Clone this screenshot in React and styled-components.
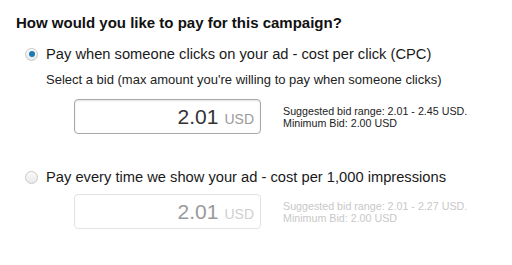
import React from 'react'
import styled, { createGlobalStyle } from 'styled-components'

const GlobalStyle = createGlobalStyle`
  html, body {
    margin: 0;
    background: #fff;
  }
  body {
    font-family: "Liberation Sans", Arial, sans-serif;
    color: #222;
  }
`

const Page = styled.div`
  padding: 14px 0 0 16px;
`

const Heading = styled.h2`
  margin: 0;
  font-size: 15px;
  line-height: 18px;
  font-weight: bold;
  color: #111;
`

const Option = styled.div`
  margin-top: ${p => p.$gap}px;
`

const OptionRow = styled.label`
  display: flex;
  align-items: center;
  gap: 8px;
  padding-left: 9px;
  font-size: 14.7px;
  line-height: 18px;
  color: #1a1a1a;
`

const Radio = styled.span`
  box-sizing: border-box;
  width: 13px;
  height: 13px;
  border-radius: 50%;
  border: 1px solid #c9c9c9;
  background: linear-gradient(#fafafa, #e9e9e9);
  display: flex;
  align-items: center;
  justify-content: center;
  flex: none;

  &::after {
    content: '';
    width: 6px;
    height: 6px;
    border-radius: 50%;
    background: ${p => (p.$checked ? '#1b79b4' : 'transparent')};
  }
`

const Hint = styled.div`
  margin: 9px 0 0 30px;
  font-size: 13px;
  line-height: 16px;
  color: #222;
`

const BidRow = styled.div`
  display: flex;
  align-items: center;
  gap: 22px;
  margin: ${p => p.$top}px 0 0 58px;
`

const BidBox = styled.div`
  box-sizing: border-box;
  width: 187px;
  height: 35px;
  border: 1px solid ${p => (p.$disabled ? '#e2e2e2' : '#a8a8a8')};
  border-radius: 4px;
  box-shadow: ${p => (p.$disabled ? 'none' : 'inset 0 1px 2px rgba(0,0,0,0.12)')};
  display: flex;
  align-items: baseline;
  justify-content: flex-end;
  gap: 6px;
  padding: 0 6px 0 0;
  line-height: 33px;
`

const Amount = styled.span`
  font-size: 21px;
  color: ${p => (p.$disabled ? '#9a9a9a' : '#333')};
`

const Currency = styled.span`
  font-size: 14px;
  color: ${p => (p.$disabled ? '#cfcfcf' : '#9a9a9a')};
`

const Suggest = styled.div`
  font-size: 10.7px;
  line-height: 12px;
  color: ${p => (p.$disabled ? '#c8c8c8' : '#222')};
`

function Bid({ amount, range, disabled, top }) {
  return (
    <BidRow $top={top}>
      <BidBox $disabled={disabled}>
        <Amount $disabled={disabled}>{amount}</Amount>
        <Currency $disabled={disabled}>USD</Currency>
      </BidBox>
      <Suggest $disabled={disabled}>
        Suggested bid range: {range} USD.
        <br />
        Minimum Bid: 2.00 USD
      </Suggest>
    </BidRow>
  )
}

export default function App() {
  return (
    <Page>
      <GlobalStyle />
      <Heading>How would you like to pay for this campaign?</Heading>
      <Option $gap={13}>
        <OptionRow>
          <Radio $checked />
          Pay when someone clicks on your ad - cost per click (CPC)
        </OptionRow>
        <Hint>Select a bid (max amount you're willing to pay when someone clicks)</Hint>
        <Bid amount="2.01" range="2.01 - 2.45" top={11} />
      </Option>
      <Option $gap={34}>
        <OptionRow>
          <Radio />
          Pay every time we show your ad - cost per 1,000 impressions
        </OptionRow>
        <Bid amount="2.01" range="2.01 - 2.27" top={8} disabled />
      </Option>
    </Page>
  )
}
